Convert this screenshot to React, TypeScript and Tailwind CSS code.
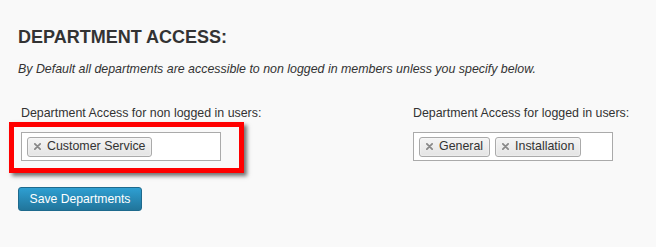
function Tag({ label }: { label: string }) {
  return (
    <span className="inline-flex items-center h-[20px] pl-[6px] pr-[6px] gap-[6px] rounded-[3px] border border-[#aaa] bg-gradient-to-b from-[#f4f4f4] to-[#e4e4e4] text-[12.4px] text-[#333] leading-none shadow-[0_0_2px_#fff_inset]">
      <svg viewBox="0 0 8 8" className="w-[7px] h-[7px]">
        <path d="M1 1 L7 7 M7 1 L1 7" stroke="#888" strokeWidth="2" strokeLinecap="round" />
      </svg>
      {label}
    </span>
  )
}

function TagBox({ tags }: { tags: string[] }) {
  return (
    <div className="w-[200px] h-[29px] border border-[#aaa] bg-white flex items-center gap-[5px] px-[5px]">
      {tags.map((t) => (
        <Tag key={t} label={t} />
      ))}
    </div>
  )
}

export default function App() {
  return (
    <div className="w-[656px] h-[247px] bg-[#f9f9f9] text-[#333] font-['Liberation_Sans',Arial,sans-serif] pl-[18px] pt-[27px]">
      <h2 className="text-[18px] font-bold leading-[20px] text-[#333]">DEPARTMENT ACCESS:</h2>
      <p className="mt-[14px] text-[12.4px] italic leading-[16px]">
        By Default all departments are accessible to non logged in members unless you specify below.
      </p>

      <div className="mt-[29px] flex">
        <div className="w-[395px] pl-[3px]">
          <div className="text-[12.4px] leading-[15px]">Department Access for non logged in users:</div>
          <div className="relative mt-[11px] w-[200px]">
            <TagBox tags={['Customer Service']} />
            {/* annotation */}
            <div className="absolute -left-[12px] -top-[10px] w-[235px] h-[51px] border-[5px] border-[#ff0000] shadow-[3px_3px_4px_rgba(0,0,0,0.55)] pointer-events-none" />
          </div>
        </div>
        <div>
          <div className="text-[12.4px] leading-[15px]">Department Access for logged in users:</div>
          <div className="mt-[11px]">
            <TagBox tags={['General', 'Installation']} />
          </div>
        </div>
      </div>

      <button className="mt-[26px] w-[124px] h-[24px] rounded-[3px] border border-[#1e6a8d] bg-gradient-to-b from-[#2e9fd2] to-[#21759b] text-white text-[12.2px] leading-none">
        Save Departments
      </button>
    </div>
  )
}
